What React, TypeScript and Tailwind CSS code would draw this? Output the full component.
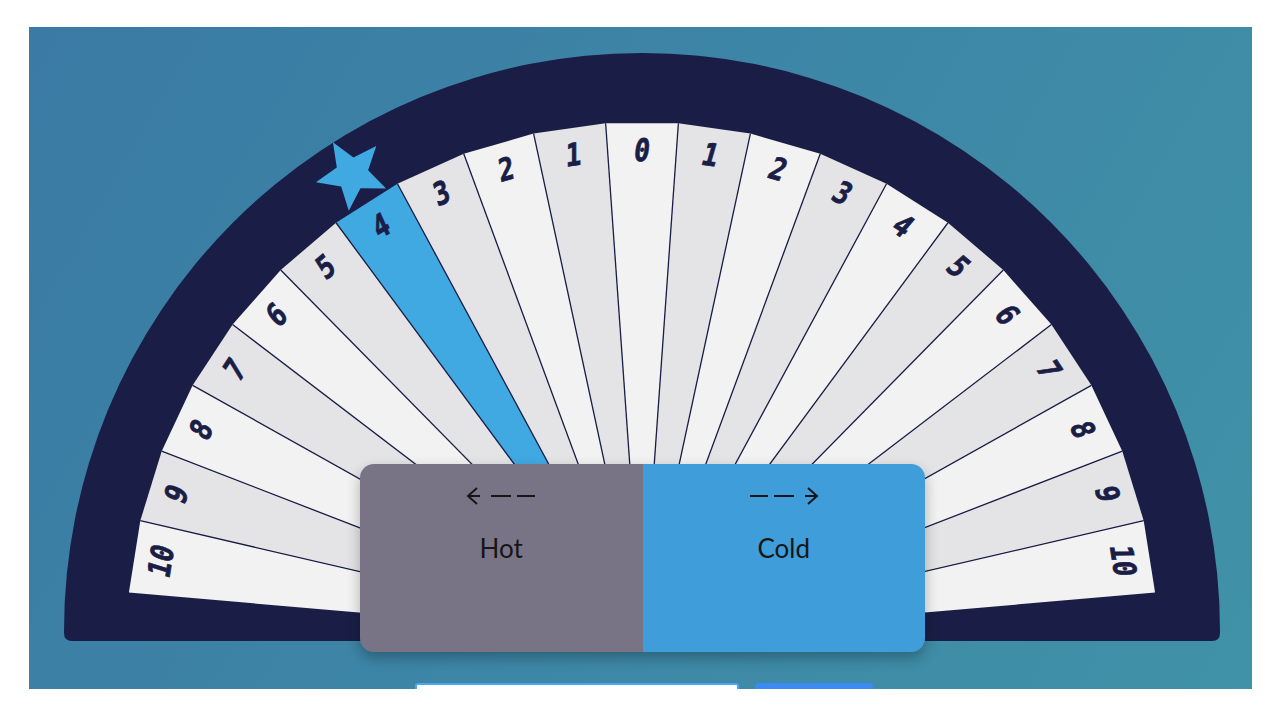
import React from "react";

const CX = 642;
const CY = 637;
const R = 515;
const STEP = 8.1;
const NAVY = "#1a1e46";

const rad = (d: number) => (d * Math.PI) / 180;
const pt = (deg: number, r: number) => [CX + r * Math.sin(rad(deg)), CY - r * Math.cos(rad(deg))];

const wedges = Array.from({ length: 21 }, (_, i) => i - 10);

function Dial() {
  return (
    <svg width={1223} height={626} viewBox="29 27 1223 626" className="block overflow-visible">
      <path
        d="M64 631 A578 578 0 0 1 1220 631 L1220 633 Q1220 641 1212 641 L72 641 Q64 641 64 633 Z"
        fill={NAVY}
      />
      {wedges.map((k) => {
        const a = k * STEP - STEP / 2;
        const b = k * STEP + STEP / 2;
        const [x1, y1] = pt(a, R);
        const [x2, y2] = pt(b, R);
        const fill = k === -4 ? "#41a9e1" : Math.abs(k) % 2 === 1 ? "#e4e4e6" : "#f2f2f3";
        return <polygon key={k} points={`${CX},${CY} ${x1},${y1} ${x2},${y2}`} fill={fill} />;
      })}
      {wedges.slice(1).map((k) => {
        const a = k * STEP - STEP / 2;
        const [x, y] = pt(a, R);
        return <line key={k} x1={CX} y1={CY} x2={x} y2={y} stroke={NAVY} strokeWidth={1.3} />;
      })}
      {wedges.map((k) => {
        const [x, y] = pt(k * STEP, 487);
        return (
          <g key={k} transform={`translate(${x} ${y}) rotate(${k * STEP})`}>
            <text
              x={0}
              y={0}
              textAnchor="middle"
              dominantBaseline="central"
              fill={NAVY}
              stroke={NAVY}
              strokeWidth={0.8}
              fontFamily="'DejaVu Sans Mono', monospace"
              fontWeight={700}
              fontSize={31}
              transform="skewX(-8) scale(0.84 1)"
            >
              {Math.abs(k)}
            </text>
          </g>
        );
      })}
      <polygon points={starPoints(352, 174, 37, 16.5, 23)} fill="#41a9e1" />
    </svg>
  );
}

function starPoints(cx: number, cy: number, ro: number, ri: number, start: number) {
  const pts: string[] = [];
  for (let i = 0; i < 10; i++) {
    const r = i % 2 === 0 ? ro : ri;
    const a = rad(start + i * 36);
    pts.push(`${cx + r * Math.cos(a)},${cy + r * Math.sin(a)}`);
  }
  return pts.join(" ");
}

function ArrowLeft() {
  return (
    <svg width="70" height="20" viewBox="0 0 70 20" fill="none" stroke="#161616" strokeWidth="2">
      <path d="M11 2 L2 10 L11 18" strokeLinejoin="miter" />
      <path d="M2 10 H14" />
      <path d="M25 10 H45" />
      <path d="M51 10 H69" />
    </svg>
  );
}

function ArrowRight() {
  return (
    <svg width="70" height="20" viewBox="0 0 70 20" fill="none" stroke="#161616" strokeWidth="2">
      <path d="M1 10 H19" />
      <path d="M25 10 H45" />
      <path d="M56 10 H68" />
      <path d="M59 2 L68 10 L59 18" strokeLinejoin="miter" />
    </svg>
  );
}

export default function App() {
  return (
    <div className="min-h-screen bg-white pt-[27px] pl-[29px] pr-[28px]">
      <div className="h-[662px] overflow-hidden bg-[linear-gradient(120deg,#3a7aa4,#4092a8)]">
        <div className="relative h-[626px]">
          <Dial />
          <div className="absolute left-[331px] top-[437px] flex h-[188px] w-[565px] overflow-hidden rounded-[14px] shadow-[0_6px_14px_rgba(0,0,0,0.28)] font-['Lato',sans-serif] text-[26px] text-[#161616]">
            <div className="flex flex-1 flex-col items-center bg-[#787486] pt-[22px]">
              <ArrowLeft />
              <span className="mt-[29px] leading-none">Hot</span>
            </div>
            <div className="flex flex-1 flex-col items-center bg-[#3f9dda] pt-[22px]">
              <ArrowRight />
              <span className="mt-[29px] leading-none">Cold</span>
            </div>
          </div>
        </div>
        <div className="mt-[30px] flex justify-center gap-4 pl-[6px]">
          <div className="h-[40px] w-[324px] rounded-[3px] border-2 border-[#4aa6f2] bg-white" />
          <div className="h-[40px] w-[118px] rounded-[4px] bg-[#3b8bf2]" />
        </div>
      </div>
    </div>
  );
}
